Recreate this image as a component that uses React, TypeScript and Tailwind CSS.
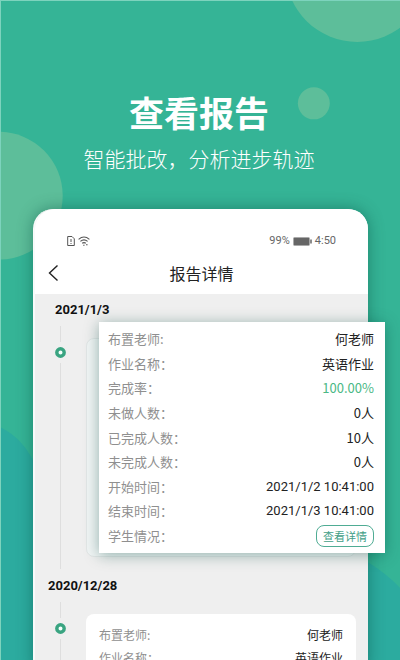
import clsx from "clsx"

const firstReport = [
  { label: "布置老师:", value: "何老师" },
  { label: "作业名称：", value: "英语作业" },
  { label: "完成率：", value: "100.00%", highlight: true },
  { label: "未做人数：", value: "0人" },
  { label: "已完成人数：", value: "10人" },
  { label: "未完成人数：", value: "0人" },
  { label: "开始时间：", value: "2021/1/2 10:41:00", time: true },
  { label: "结束时间：", value: "2021/1/3 10:41:00", time: true },
]

const secondReport = [
  { label: "布置老师:", value: "何老师" },
  { label: "作业名称：", value: "英语作业" },
]

function Backdrop() {
  return (
    <svg className="absolute inset-0 w-full h-full" viewBox="0 0 400 660" preserveAspectRatio="xMidYMin slice" aria-hidden="true">
      <circle cx="357" cy="-31" r="72" fill="#5dbe9a" />
      <circle cx="313.500" cy="102.500" r="16" fill="#5dbe9a" />
      <circle cx="-2" cy="195" r="64" fill="#5dbe9a" />
      <path d="M0 427 C16 435 26 447 34 463 C130 610 250 455 368 562 C380 570 390 577 400 588 V660 H0Z" fill="#2cab9f" />
    </svg>
  )
}

function StatusBar() {
  return (
    <div className="flex items-center justify-between px-8 pt-6 h-10 font-[Roboto,sans-serif] text-[11px] leading-4 text-[#666]">
      <div className="flex items-center gap-[3px]">
        <svg className="w-2 h-3" viewBox="0 0 8 12" fill="none" stroke="#555">
          <path d="M1 1.500h4l2.300 2.300V10.500H.7V1.500Z" />
          <path d="M4 4v3M4 8v1" />
        </svg>
        <svg className="w-3 h-3" viewBox="0 0 12 12" fill="none" stroke="#555" strokeWidth="1.100">
          <path d="M.6 4.300Q6-.2 11.400 4.300M2.400 6.400Q6 3.400 9.600 6.400M4.200 8.300Q6 7 7.800 8.300" />
          <path d="M5.200 10.200h1.300M8 9.800h1.600" />
        </svg>
      </div>
      <div className="flex items-center gap-[3px]">
        <span>99%</span>
        <svg className="w-[19px] h-[9px]" viewBox="0 0 19 9">
          <rect x=".5" y=".5" width="16" height="8" rx="1" fill="#666" stroke="#aaa" />
          <path d="M18 2.500v4" stroke="#666" strokeWidth="1.500" />
        </svg>
        <span>4:50</span>
      </div>
    </div>
  )
}

function Marker() {
  return (
    <span className="flex flex-col items-center self-stretch w-[11px] shrink-0">
      <span className="w-px h-4 bg-[#dedede]" />
      <svg className="w-[11px] h-[11px] my-[5px] shrink-0" viewBox="0 0 11 11">
        <circle cx="5.500" cy="5.500" r="3.700" fill="#f4fffb" stroke="#39a481" strokeWidth="3.400" />
      </svg>
      <span className="w-px flex-1 bg-[#dedede]" />
    </span>
  )
}

export default function App() {
  return (
    <main className="relative h-screen overflow-hidden bg-[#35b496] border-t border-l border-[#7dd3bd] font-['Noto_Sans_CJK_SC',sans-serif]">
      <Backdrop />

      <div className="relative min-h-full flex flex-col">
        <header className="pt-[83px] pb-[33px] pr-[3px] text-center text-white">
          <h1 className="text-[35px] leading-[56px] font-bold">查看报告</h1>
          <p className="text-[21px] leading-9 font-light">智能批改，分析进步轨迹</p>
        </header>

        {/* Phone */}
        <section className="flex-1 mx-8 rounded-t-[20px] bg-[#efefef] border-l-2 border-[#f8fafa] shadow-[0_0_16px_rgba(0,70,60,0.45)]">
          <div className="h-[85px] rounded-t-[20px] bg-white">
            <StatusBar />
            <div className="grid grid-cols-3 items-center pt-2 px-3">
              <button aria-label="返回" className="justify-self-start">
                <svg className="w-3 h-4" viewBox="0 0 12 16" fill="none" stroke="#222" strokeWidth="1.400">
                  <path d="M10.500 .5 2.500 8l8 7.500" />
                </svg>
              </button>
              <h2 className="text-center whitespace-nowrap text-[16px] leading-8 text-[#222]">报告详情</h2>
            </div>
          </div>

          <h3 className="pl-5 pt-2 font-[Roboto,sans-serif] text-[13px] leading-4 font-bold text-[#111]">2021/1/3</h3>
          <div className="flex gap-5 mt-2 pl-5 pr-3">
            <Marker />
            <div className="relative flex-1 my-3 h-[219px] rounded-lg bg-[#f1f5f5] border border-[#e2e6e6]">
              {/* Enlarged card lifted above the timeline */}
              <article className="absolute -top-[17px] left-3 -right-[30px] flex flex-col justify-between h-[231px] py-[5px] pl-[9px] pr-[11px] bg-white text-[13px] leading-6 shadow-[0_2px_14px_rgba(0,70,60,0.4)]">
                {firstReport.map((row) => (
                  <div key={row.label} className="flex justify-between">
                    <span className="text-[#8f8f8f]">{row.label}</span>
                    <span
                      className={clsx(
                        row.highlight ? "text-[#4bb885]" : "text-[#222]",
                        row.time && "font-[Roboto,sans-serif]"
                      )}
                    >
                      {row.value}
                    </span>
                  </div>
                ))}
                <div className="flex items-center justify-between">
                  <span className="text-[#8f8f8f]">学生情况：</span>
                  <button className="h-[22px] px-[6px] rounded-lg border border-[#4fac94] text-[11px] leading-5 text-[#429e87]">查看详情</button>
                </div>
              </article>
            </div>
          </div>

          <h3 className="pl-[13px] pt-[9px] font-[Roboto,sans-serif] text-[13px] leading-4 font-bold text-[#111]">2020/12/28</h3>
          <div className="flex gap-5 mt-2 pl-5 pr-3">
            <Marker />
            <div className="flex-1 mt-3 px-[13px] pt-[9px] rounded-t-lg bg-white text-[12px] leading-[23px]">
              {secondReport.map((row) => (
                <div key={row.label} className="flex justify-between">
                  <span className="text-[#8f8f8f]">{row.label}</span>
                  <span className="text-[#222]">{row.value}</span>
                </div>
              ))}
            </div>
          </div>
        </section>
      </div>
    </main>
  )
}
